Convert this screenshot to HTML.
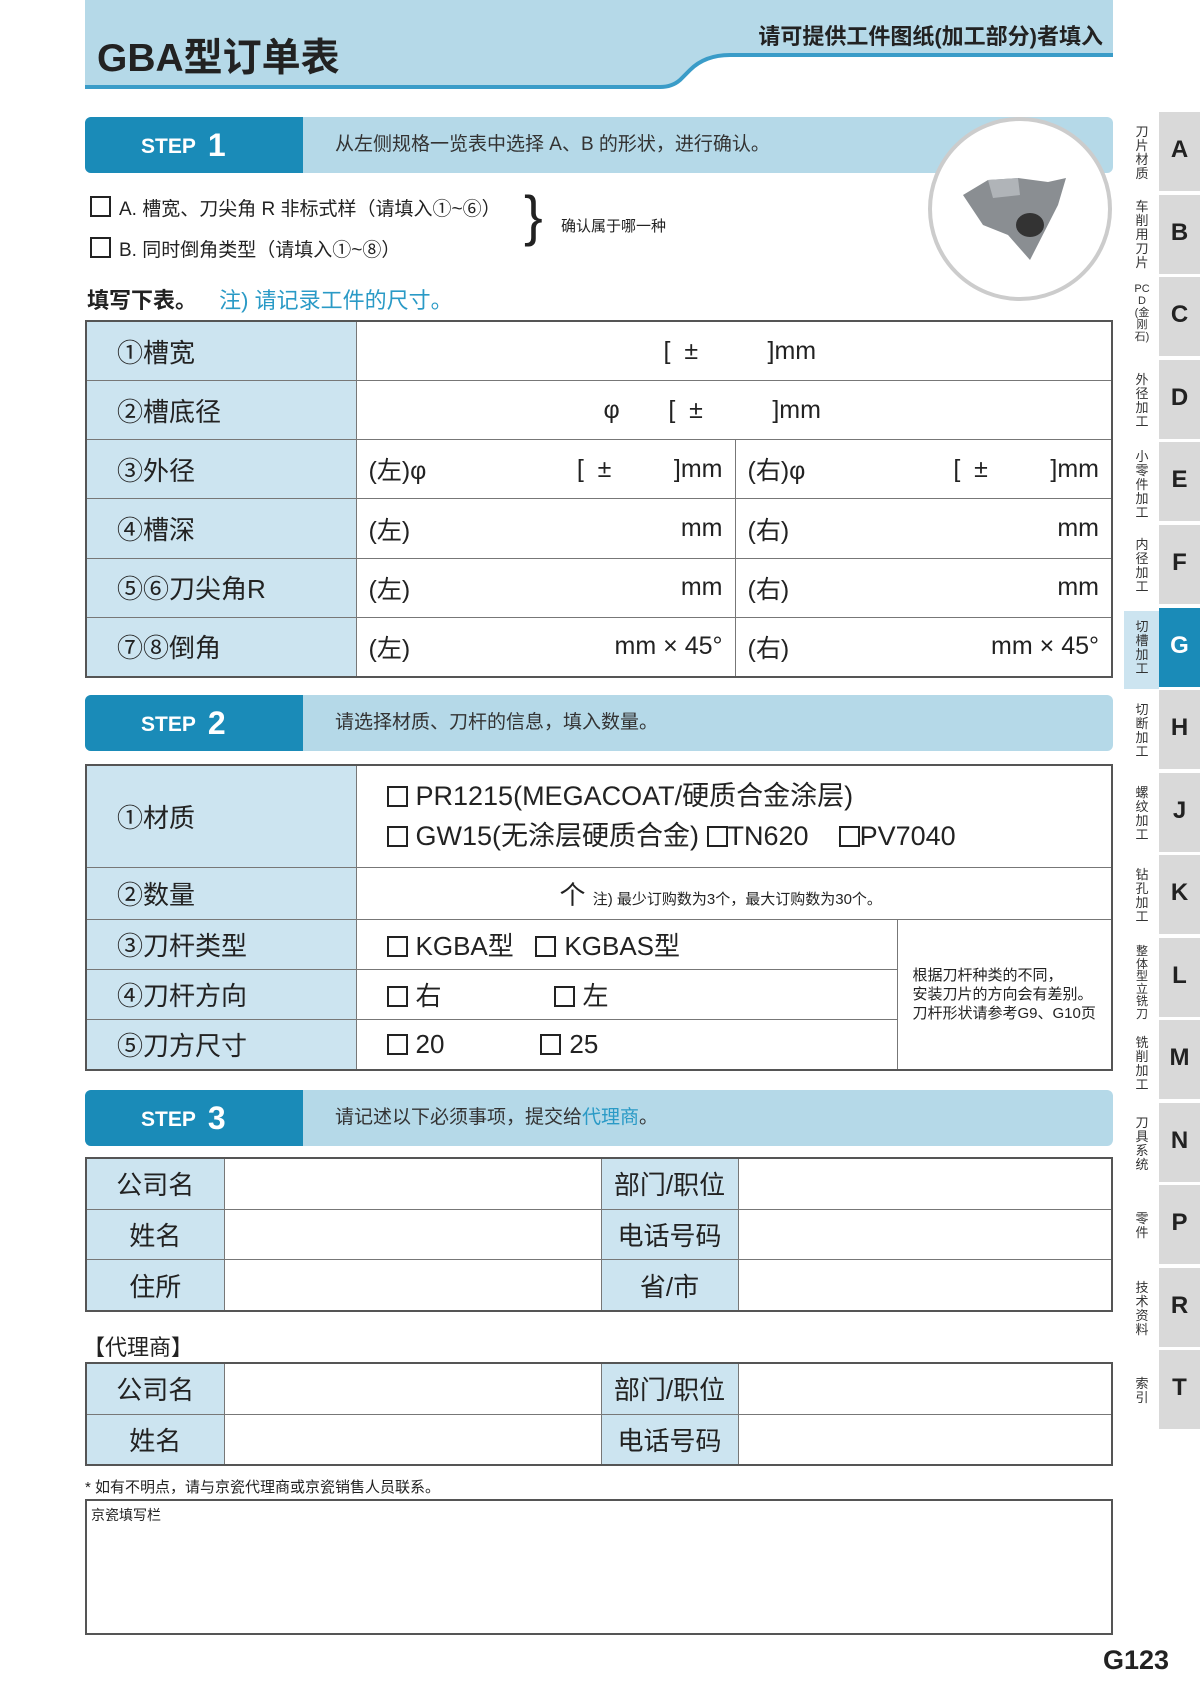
<!DOCTYPE html>
<html><head><meta charset="utf-8"><style>
*{margin:0;padding:0;box-sizing:border-box}
body{width:1200px;height:1697px;position:relative;background:#fff;font-family:"Liberation Sans","Noto Sans CJK SC",sans-serif;color:#222;overflow:hidden}
.a{position:absolute}
.bar{position:absolute;left:85px;width:1028px;height:56px;background:#b5d9e8;border-radius:6px;overflow:hidden}
.bar .d{position:absolute;left:0;top:0;width:218px;height:100%;background:#1a8bb8;color:#fff;font-weight:bold;font-size:21px;line-height:56px;padding-left:56px}
.bar .d b{font-size:32px;margin-left:12px;vertical-align:-3px}
.bar .t{position:absolute;left:250px;top:0;line-height:56px;font-size:19px;color:#333}
table{position:absolute;left:85px;width:1028px;border-collapse:collapse;border:2px solid #555}
td{border:1px solid #777;font-size:25px;padding:0 12px}
td.l{background:#cce4f0;padding-left:30px;font-size:26px}
td.c{text-align:center;padding:0}
.f{display:flex;justify-content:space-between;align-items:center}
.box{display:inline-block;width:21px;height:21px;border:2px solid #222;vertical-align:-2px;margin-right:8px}
.tab{position:absolute;left:1159px;width:41px;height:79px;background:#d9d9d9;font-weight:bold;font-size:24px;text-align:center;padding-top:24px;color:#222}
.tl{position:absolute;left:1134px;width:16px;font-size:13px;line-height:14px;text-align:center;color:#333;word-break:break-all}
</style></head><body>
<svg class="a" style="left:0;top:0" width="1200" height="100">
<path d="M85 0 H1113 V56 H730 Q705 56 690 72 L680 82 Q672 88 660 88 H85 Z" fill="#b5d9e8"/>
<path d="M85 87 H660 Q672 87 680 80 L690 70 Q705 55 730 55 H1113" fill="none" stroke="#3a9cc8" stroke-width="4"/>
</svg>
<div class="a" style="left:97px;top:27px;font-size:39px;font-weight:bold;color:#222">GBA型订单表</div>
<div class="a" style="left:733px;top:19px;width:370px;text-align:right;font-size:22px;font-weight:bold;color:#222">请可提供工件图纸(加工部分)者填入</div>

<div class="bar" style="top:117px"><div class="d">STEP<b>1</b></div><div class="t">从左侧规格一览表中选择 A、B 的形状，进行确认。</div></div>
<div class="a" style="left:928px;top:117px;width:184px;height:184px;border-radius:50%;border:4px solid #ccc;background:#fff"></div>
<svg class="a" style="left:958px;top:170px" width="120" height="100"><path d="M5 25 L30 10 L60 8 L90 12 L108 8 L100 35 L72 90 L50 65 L25 55 Z" fill="#8a8e92"/><ellipse cx="72" cy="55" rx="14" ry="12" fill="#333"/><path d="M30 10 L60 8 L62 25 L35 28Z" fill="#b0b4b8"/></svg>

<div class="a" style="left:90px;top:194px;font-size:19px"><span class="box"></span>A. 槽宽、刀尖角 R 非标式样（请填入①~⑥）</div>
<div class="a" style="left:90px;top:235px;font-size:19px"><span class="box"></span>B. 同时倒角类型（请填入①~⑧）</div>
<div class="a" style="left:524px;top:186px;font-size:56px;line-height:60px">}</div>
<div class="a" style="left:561px;top:215px;font-size:15px">确认属于哪一种</div>
<div class="a" style="left:87px;top:283px;font-size:22px;font-weight:bold">填写下表。 <span style="color:#2a9ac6;font-weight:normal;margin-left:16px">注) 请记录工件的尺寸。</span></div>

<table style="top:320px;height:358px">
<col style="width:270px"><col style="width:379px"><col>
<tr><td class="l">①槽宽</td><td colspan="2" style="padding-left:307px">[&nbsp;&nbsp;±&nbsp;&nbsp;&nbsp;&nbsp;&nbsp;&nbsp;&nbsp;&nbsp;&nbsp;&nbsp;]mm</td></tr>
<tr><td class="l">②槽底径</td><td colspan="2" style="padding-left:247px">φ&nbsp;&nbsp;&nbsp;&nbsp;&nbsp;&nbsp;&nbsp;[&nbsp;&nbsp;±&nbsp;&nbsp;&nbsp;&nbsp;&nbsp;&nbsp;&nbsp;&nbsp;&nbsp;&nbsp;]mm</td></tr>
<tr><td class="l">③外径</td><td><div class="f"><span>(左)φ</span><span>[&nbsp;&nbsp;±&nbsp;&nbsp;&nbsp;&nbsp;&nbsp;&nbsp;&nbsp;&nbsp;&nbsp;]mm</span></div></td><td><div class="f"><span>(右)φ</span><span>[&nbsp;&nbsp;±&nbsp;&nbsp;&nbsp;&nbsp;&nbsp;&nbsp;&nbsp;&nbsp;&nbsp;]mm</span></div></td></tr>
<tr><td class="l">④槽深</td><td><div class="f"><span>(左)</span><span>mm</span></div></td><td><div class="f"><span>(右)</span><span>mm</span></div></td></tr>
<tr><td class="l">⑤⑥刀尖角R</td><td><div class="f"><span>(左)</span><span>mm</span></div></td><td><div class="f"><span>(右)</span><span>mm</span></div></td></tr>
<tr><td class="l">⑦⑧倒角</td><td><div class="f"><span>(左)</span><span>mm × 45°</span></div></td><td><div class="f"><span>(右)</span><span>mm × 45°</span></div></td></tr>
</table>

<div class="bar" style="top:695px"><div class="d">STEP<b>2</b></div><div class="t">请选择材质、刀杆的信息，填入数量。</div></div>
<table style="top:764px;height:307px">
<col style="width:270px"><col style="width:541px"><col>
<tr style="height:102px"><td class="l">①材质</td><td colspan="2" style="padding-left:30px;line-height:40px;font-size:27px"><span class="box"></span>PR1215(MEGACOAT/硬质合金涂层)<br><span class="box"></span>GW15(无涂层硬质合金) <span class="box" style="margin-right:0"></span>TN620&nbsp;&nbsp;&nbsp;&nbsp;<span class="box" style="margin-right:0"></span>PV7040</td></tr>
<tr style="height:52px"><td class="l">②数量</td><td colspan="2" style="padding-left:203px;font-size:26px">个 <span style="font-size:15px">注) 最少订购数为3个，最大订购数为30个。</span></td></tr>
<tr><td class="l">③刀杆类型</td><td style="padding-left:30px;font-size:26px"><span class="box"></span>KGBA型&nbsp;&nbsp;&nbsp;<span class="box"></span>KGBAS型</td><td rowspan="3" style="font-size:15px;line-height:19px;padding-left:15px">根据刀杆种类的不同，<br>安装刀片的方向会有差别。<br>刀杆形状请参考G9、G10页</td></tr>
<tr><td class="l">④刀杆方向</td><td style="padding-left:30px;font-size:26px"><span class="box"></span>右<span style="display:inline-block;width:112px"></span><span class="box"></span>左</td></tr>
<tr><td class="l">⑤刀方尺寸</td><td style="padding-left:30px;font-size:26px"><span class="box"></span>20<span style="display:inline-block;width:96px"></span><span class="box"></span>25</td></tr>
</table>

<div class="bar" style="top:1090px"><div class="d">STEP<b>3</b></div><div class="t">请记述以下必须事项，提交给<span style="color:#2a9ac6">代理商</span>。</div></div>
<table style="top:1157px;height:155px">
<col style="width:138px"><col style="width:377px"><col style="width:137px"><col>
<tr><td class="l c">公司名</td><td></td><td class="l c">部门/职位</td><td></td></tr>
<tr><td class="l c">姓名</td><td></td><td class="l c">电话号码</td><td></td></tr>
<tr><td class="l c">住所</td><td></td><td class="l c">省/市</td><td></td></tr>
</table>
<div class="a" style="left:83px;top:1330px;font-size:22px">【代理商】</div>
<table style="top:1362px;height:104px">
<col style="width:138px"><col style="width:377px"><col style="width:137px"><col>
<tr><td class="l c">公司名</td><td></td><td class="l c">部门/职位</td><td></td></tr>
<tr><td class="l c">姓名</td><td></td><td class="l c">电话号码</td><td></td></tr>
</table>
<div class="a" style="left:85px;top:1476px;font-size:15px">* 如有不明点，请与京瓷代理商或京瓷销售人员联系。</div>
<div class="a" style="left:85px;top:1499px;width:1028px;height:136px;border:2px solid #555;font-size:14px;padding:4px 4px">京瓷填写栏</div>
<div class="a" style="left:1103px;top:1645px;font-size:27px;font-weight:bold">G123</div>

<div class="a" style="left:1124px;top:611px;width:35px;height:78px;background:#cce4f0"></div>
<div class="tab" style="top:112px">A</div><div class="tl" style="top:125px">刀片材质</div>
<div class="tab" style="top:195px">B</div><div class="tl" style="top:200px">车削用刀片</div>
<div class="tab" style="top:277px">C</div><div class="tl" style="top:283px;font-size:11px;line-height:12px">PCD(金刚石)</div>
<div class="tab" style="top:360px">D</div><div class="tl" style="top:373px">外径加工</div>
<div class="tab" style="top:442px">E</div><div class="tl" style="top:450px">小零件加工</div>
<div class="tab" style="top:525px">F</div><div class="tl" style="top:538px">内径加工</div>
<div class="tab" style="top:608px;background:#1a8bb8;color:#fff">G</div><div class="tl" style="top:620px">切槽加工</div>
<div class="tab" style="top:690px">H</div><div class="tl" style="top:703px">切断加工</div>
<div class="tab" style="top:773px">J</div><div class="tl" style="top:786px">螺纹加工</div>
<div class="tab" style="top:855px">K</div><div class="tl" style="top:868px">钻孔加工</div>
<div class="tab" style="top:938px">L</div><div class="tl" style="top:945px;font-size:12px;line-height:12.5px">整体型立铣刀</div>
<div class="tab" style="top:1020px">M</div><div class="tl" style="top:1036px">铣削加工</div>
<div class="tab" style="top:1103px">N</div><div class="tl" style="top:1116px">刀具系统</div>
<div class="tab" style="top:1185px">P</div><div class="tl" style="top:1212px">零件</div>
<div class="tab" style="top:1268px">R</div><div class="tl" style="top:1281px">技术资料</div>
<div class="tab" style="top:1350px">T</div><div class="tl" style="top:1377px">索引</div>
</body></html>
